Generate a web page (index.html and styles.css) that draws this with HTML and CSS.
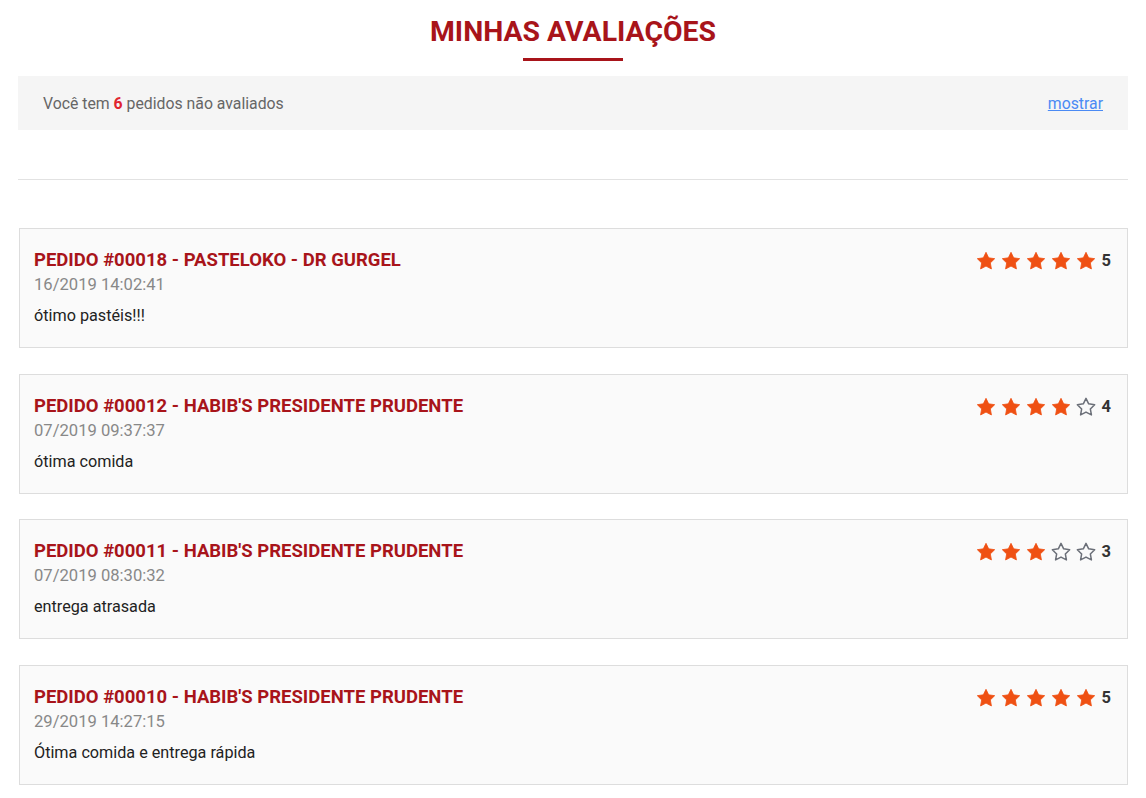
FILE: index.html
```html
<!DOCTYPE html>
<html lang="pt-BR">
<head>
<meta charset="utf-8">
<title>Minhas Avaliações</title>
<link rel="stylesheet" href="styles.css">
</head>
<body>
<svg width="0" height="0" class="defs">
  <defs>
    <symbol id="star" viewBox="0 0 24 24">
      <path d="M12 1.6l3.2 6.6 7.2 1-5.2 5.1 1.3 7.2L12 18.1l-6.5 3.4 1.3-7.2L1.6 9.2l7.2-1z" stroke-linejoin="round"/>
    </symbol>
  </defs>
</svg>
<div class="page">
  <h1 class="title">MINHAS AVALIAÇÕES</h1>
  <div class="title-bar"></div>
  <div class="notice">
    <span>Você tem <b>6</b> pedidos não avaliados</span>
    <a href="#" class="show">mostrar</a>
  </div>
  <hr class="sep">
  <div class="list">
    <div class="card">
      <div class="card-text">
        <h2 class="card-title">PEDIDO #00018 - PASTELOKO - DR GURGEL</h2>
        <div class="date">16/2019 14:02:41</div>
        <div class="comment">ótimo pastéis!!!</div>
      </div>
      <div class="rating">
        <svg class="st on"><use href="#star"/></svg><svg class="st on"><use href="#star"/></svg><svg class="st on"><use href="#star"/></svg><svg class="st on"><use href="#star"/></svg><svg class="st on"><use href="#star"/></svg><span class="num">5</span>
      </div>
    </div>
    <div class="card">
      <div class="card-text">
        <h2 class="card-title">PEDIDO #00012 - HABIB'S PRESIDENTE PRUDENTE</h2>
        <div class="date">07/2019 09:37:37</div>
        <div class="comment">ótima comida</div>
      </div>
      <div class="rating">
        <svg class="st on"><use href="#star"/></svg><svg class="st on"><use href="#star"/></svg><svg class="st on"><use href="#star"/></svg><svg class="st on"><use href="#star"/></svg><svg class="st off"><use href="#star"/></svg><span class="num">4</span>
      </div>
    </div>
    <div class="card">
      <div class="card-text">
        <h2 class="card-title">PEDIDO #00011 - HABIB'S PRESIDENTE PRUDENTE</h2>
        <div class="date">07/2019 08:30:32</div>
        <div class="comment">entrega atrasada</div>
      </div>
      <div class="rating">
        <svg class="st on"><use href="#star"/></svg><svg class="st on"><use href="#star"/></svg><svg class="st on"><use href="#star"/></svg><svg class="st off"><use href="#star"/></svg><svg class="st off"><use href="#star"/></svg><span class="num">3</span>
      </div>
    </div>
    <div class="card">
      <div class="card-text">
        <h2 class="card-title">PEDIDO #00010 - HABIB'S PRESIDENTE PRUDENTE</h2>
        <div class="date">29/2019 14:27:15</div>
        <div class="comment">Ótima comida e entrega rápida</div>
      </div>
      <div class="rating">
        <svg class="st on"><use href="#star"/></svg><svg class="st on"><use href="#star"/></svg><svg class="st on"><use href="#star"/></svg><svg class="st on"><use href="#star"/></svg><svg class="st on"><use href="#star"/></svg><span class="num">5</span>
      </div>
    </div>
  </div>
</div>
</body>
</html>
```

FILE: styles.css
```css
* { box-sizing: border-box; }
html, body { margin: 0; padding: 0; background: #fff; }
body { font-family: Roboto, "Liberation Sans", Arial, sans-serif; color: #222; }
.defs { position: absolute; width: 0; height: 0; overflow: hidden; }
.page { padding: 0 18px; display: flex; flex-direction: column; }
.title {
  margin: 14px 0 0;
  text-align: center;
  font-size: 28.4px;
  line-height: 36px;
  font-weight: 700;
  color: #a8141a;
}
.title-bar {
  width: 100px;
  height: 3px;
  background: #a8141a;
  margin: 8px auto 0;
}
.notice {
  margin-top: 15px;
  height: 54px;
  background: #f5f5f5;
  padding: 0 25px;
  display: flex;
  align-items: center;
  justify-content: space-between;
  font-size: 15.8px;
  color: #666;
}
.notice b { color: #e0252f; font-weight: 700; }
.show { color: #4a8af4; text-decoration: underline; font-size: 15.8px; }
.sep {
  margin: 49px 0 0;
  border: 0;
  border-top: 1px solid #e2e2e2;
  height: 0;
}
.list {
  margin-top: 48px;
  display: flex;
  flex-direction: column;
  gap: 25.6px;
  padding-left: 1px;
}
.card {
  height: 120px;
  border: 1px solid #ddd;
  background: #fafafa;
  padding: 20px 16px 0 14px;
  display: flex;
  justify-content: space-between;
  align-items: flex-start;
}
.card-title {
  margin: 0;
  font-size: 18.5px;
  line-height: 22px;
  font-weight: 700;
  color: #a8141a;
}
.date {
  margin-top: 4px;
  font-size: 16.6px;
  line-height: 20px;
  color: #888;
}
.comment {
  margin-top: 10px;
  font-size: 16.2px;
  line-height: 21px;
  color: #222;
}
.rating {
  display: flex;
  align-items: center;
  gap: 5px;
  margin-top: 1px;
}
.st { width: 20px; height: 20px; display: block; }
.st.on { fill: #ef5013; stroke: #ef5013; stroke-width: 1; }
.st.off { fill: none; stroke: #6b6f78; stroke-width: 1.8; }
.num { font-size: 16.5px; font-weight: 700; color: #333; margin-left: 1px; line-height: 22px; }
```
